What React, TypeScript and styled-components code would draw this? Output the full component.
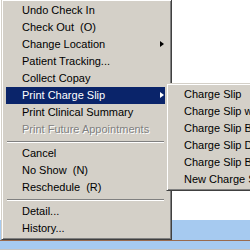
import React from "react";
import styled, { createGlobalStyle } from "styled-components";

const GlobalStyle = createGlobalStyle`
    html, body {
        margin: 0;
        padding: 0;
        background: #fff;
        overflow: hidden;
    }
`;

const Desktop = styled.div`
    position: relative;
    width: 250px;
    height: 250px;
    overflow: hidden;
    display: flex;
    flex-direction: column;
    font-family: Tahoma, "Liberation Sans", Arial, sans-serif;
    font-size: 11px;
`;

const WhiteArea = styled.div`
    height: 220px;
    background: #fff;
`;

const BlueBand = styled.div`
    flex: 1;
    background: #a6caf0;
    display: flex;
    flex-direction: column;
`;

const Rule = styled.div<{ $color: string; $top: number }>`
    height: 1px;
    margin-top: ${({ $top }) => $top}px;
    background: ${({ $color }) => $color};
`;

const Menu = styled.div<{ $left: number; $top: number }>`
    position: absolute;
    left: ${({ $left }) => $left}px;
    top: ${({ $top }) => $top}px;
    background: #d4d0c8;
    border-top: 1px solid #d4d0c8;
    border-left: 1px solid #d4d0c8;
    border-right: 1px solid #404040;
    border-bottom: 1px solid #404040;
    box-shadow: inset 1px 1px 0 #fff, inset -1px -1px 0 #808080;
    display: flex;
    flex-direction: column;
`;

const MainMenu = styled(Menu)`
    width: 159px;
    padding: 2px 6px 2px 4px;
`;

const SubMenu = styled(Menu)`
    width: 160px;
    padding: 2px 3px;
`;

const Item = styled.div<{ $active?: boolean; $disabled?: boolean; $indent: number }>`
    position: relative;
    height: 17px;
    line-height: 17px;
    padding-left: ${({ $indent }) => $indent}px;
    white-space: pre;
    color: ${({ $active, $disabled }) => ($active ? "#fff" : $disabled ? "#808080" : "#000")};
    background: ${({ $active }) => ($active ? "#0a246a" : "transparent")};
    text-shadow: ${({ $disabled }) => ($disabled ? "1px 1px 0 #fff" : "none")};
`;

const Arrow = styled.span<{ $active?: boolean }>`
    position: absolute;
    right: 1px;
    top: 5px;
    width: 0;
    height: 0;
    border-top: 3.5px solid transparent;
    border-bottom: 3.5px solid transparent;
    border-left: 4px solid ${({ $active }) => ($active ? "#fff" : "#000")};
`;

const Separator = styled.div`
    height: 7px;
    display: flex;
    flex-direction: column;
    justify-content: center;

    &::before {
        content: "";
        height: 1px;
        background: #808080;
        border-bottom: 1px solid #fff;
        margin: 0 1px;
    }
`;

type Entry = { label?: string; sub?: boolean; active?: boolean; disabled?: boolean; sep?: boolean };

const mainItems: Entry[] = [
    { label: "Undo Check In" },
    { label: "Check Out  (O)" },
    { label: "Change Location", sub: true },
    { label: "Patient Tracking..." },
    { label: "Collect Copay" },
    { label: "Print Charge Slip", sub: true, active: true },
    { label: "Print Clinical Summary" },
    { label: "Print Future Appointments", disabled: true },
    { sep: true },
    { label: "Cancel" },
    { label: "No Show  (N)" },
    { label: "Reschedule  (R)" },
    { sep: true },
    { label: "Detail..." },
    { label: "History..." },
];

const subItems = [
    "Charge Slip",
    "Charge Slip with Notes",
    "Charge Slip Batch",
    "Charge Slip Double",
    "Charge Slip Balance",
    "New Charge Slip",
];

export default function App() {
    return (
        <>
            <GlobalStyle />
            <Desktop>
                <WhiteArea />
                <BlueBand>
                    <Rule $color="#9a6a4c" $top={20} />
                    <Rule $color="#c4c4c4" $top={8} />
                </BlueBand>

                <MainMenu $left={1} $top={-1}>
                    {mainItems.map((it, i) =>
                        it.sep ? (
                            <Separator key={i} />
                        ) : (
                            <Item key={i} $indent={16} $active={it.active} $disabled={it.disabled}>
                                {it.label}
                                {it.sub && <Arrow $active={it.active} />}
                            </Item>
                        )
                    )}
                </MainMenu>

                <SubMenu $left={166} $top={83}>
                    {subItems.map((s) => (
                        <Item key={s} $indent={14}>{s}</Item>
                    ))}
                </SubMenu>
            </Desktop>
        </>
    );
}
